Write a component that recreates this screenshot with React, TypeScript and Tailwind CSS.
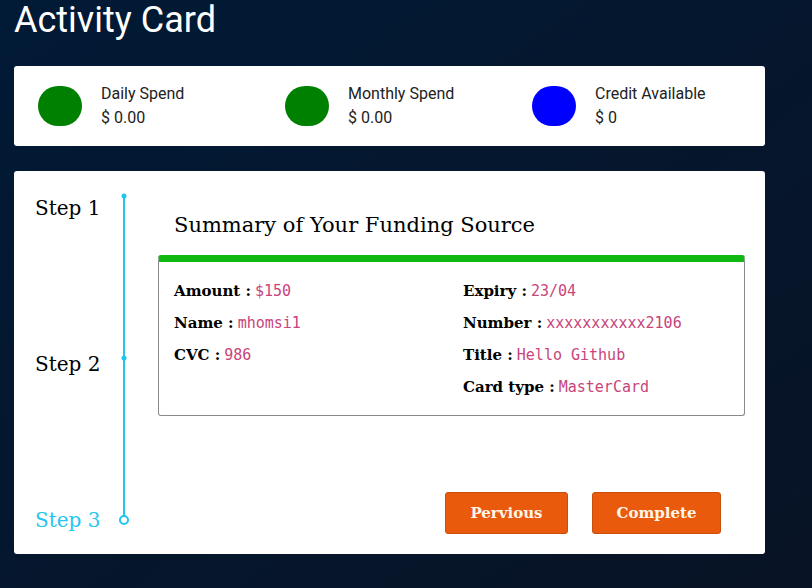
import React from "react";

const stats = [
  { label: "Daily Spend", value: "$ 0.00", color: "bg-[#008000]" },
  { label: "Monthly Spend", value: "$ 0.00", color: "bg-[#008000]" },
  { label: "Credit Available", value: "$ 0", color: "bg-[#0000ff]" },
];

const leftRows = [
  { label: "Amount", value: "$150" },
  { label: "Name", value: "mhomsi1" },
  { label: "CVC", value: "986" },
];

const rightRows = [
  { label: "Expiry", value: "23/04" },
  { label: "Number", value: "xxxxxxxxxxx2106" },
  { label: "Title", value: "Hello Github" },
  { label: "Card type", value: "MasterCard" },
];

const serif = "font-['DejaVu_Serif',Georgia,serif]";

const Row = ({ label, value }: { label: string; value: string }) => (
  <div className="h-[32px] flex items-center">
    <span className={`${serif} font-bold text-[15px] text-black`}>{label} :</span>
    <span className="ml-[4px] font-['DejaVu_Sans_Mono',monospace] text-[15px] text-[#c8457b]">
      {value}
    </span>
  </div>
);

const App = () => {
  return (
    <div className="w-[812px] h-[588px] overflow-hidden bg-gradient-to-br from-[#011a36] to-[#081325] font-['Roboto',sans-serif]">
      {/* Title */}
      <h1 className="pl-[14px] text-[36px] leading-[41px] text-white">Activity Card</h1>

      {/* Stats card */}
      <div className="mt-[25px] ml-[14px] w-[751px] h-[80px] bg-white rounded-[3px] flex items-center pl-[24px]">
        {stats.map((s) => (
          <div key={s.label} className="w-[247px] shrink-0 flex items-center">
            <div className={`w-[44px] h-[40px] rounded-full ${s.color}`} />
            <div className="ml-[19px] text-[16px] leading-[24px] text-[#222]">
              <p>{s.label}</p>
              <p>{s.value}</p>
            </div>
          </div>
        ))}
      </div>

      {/* Main card */}
      <div className="mt-[25px] ml-[14px] w-[751px] h-[383px] bg-white rounded-[3px] flex pt-[24px] pb-[20px]">
        {/* Stepper */}
        <div className="flex pl-[21px]">
          <div className={`${serif} text-[20px] leading-[26px] w-[83px] flex flex-col justify-between pb-[1px]`}>
            <p className="text-black">Step 1</p>
            <p className="text-black">Step 2</p>
            <p className="text-[#27c4ef]">Step 3</p>
          </div>
          <svg width="12" height="332" viewBox="0 0 12 332" className="-mt-[2px]">
            <line x1="6" y1="3" x2="6" y2="323" stroke="#1fc6ef" strokeWidth="2" />
            <circle cx="6" cy="3" r="2.5" fill="#1fc6ef" />
            <circle cx="6" cy="165" r="2.5" fill="#1fc6ef" />
            <circle cx="6" cy="327" r="4" fill="white" stroke="#1fc6ef" strokeWidth="2" />
          </svg>
        </div>

        {/* Summary */}
        <div className="ml-[28px] w-[587px] flex flex-col">
          <h2 className={`${serif} pl-[16px] pt-[16px] text-[21px] leading-[28px] text-black`}>
            Summary of Your Funding Source
          </h2>
          <div className="mt-[16px] border border-[#8a8a8a] border-t-[7px] border-t-[#12b812] rounded-[3px] grid grid-cols-2 pl-[15px] pt-[13px] pb-[12px]">
            <div>
              {leftRows.map((r) => (
                <Row key={r.label} {...r} />
              ))}
            </div>
            <div className="pl-[4px]">
              {rightRows.map((r) => (
                <Row key={r.label} {...r} />
              ))}
            </div>
          </div>
          <div className="mt-auto flex justify-end gap-[24px] pr-[24px]">
            <button className={`${serif} w-[123px] h-[42px] bg-[#e95a0c] border border-[#c84e0c] rounded-[3px] text-[#fff5e8] font-bold text-[15px]`}>
              Pervious
            </button>
            <button className={`${serif} w-[129px] h-[42px] bg-[#e95a0c] border border-[#c84e0c] rounded-[3px] text-[#fff5e8] font-bold text-[15px]`}>
              Complete
            </button>
          </div>
        </div>
      </div>
    </div>
  );
};

export default App;
